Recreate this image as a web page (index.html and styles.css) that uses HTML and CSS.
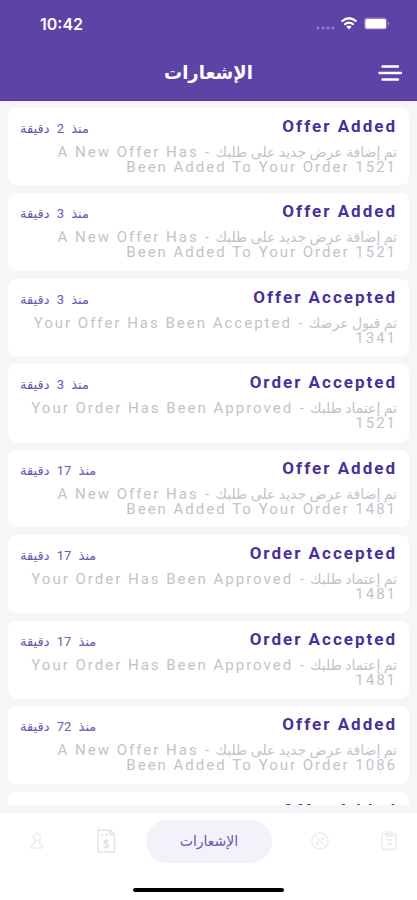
FILE: index.html
```html
<!DOCTYPE html>
<html lang="ar" dir="rtl">
<head>
<meta charset="utf-8">
<meta name="viewport" content="width=device-width, initial-scale=1">
<title>الإشعارات</title>
<link rel="stylesheet" href="styles.css">
</head>
<body>
<div class="app">
  <header class="header">
    <div class="status" dir="ltr">
      <span class="clock">10:42</span>
      <svg class="status-icons" width="76" height="16" viewBox="0 0 76 16" aria-hidden="true">
        <g fill="#9482c6"><circle cx="3" cy="12" r="1.5"/><circle cx="8" cy="12" r="1.5"/><circle cx="13" cy="12" r="1.5"/><circle cx="18" cy="12" r="1.5"/></g>
        <g fill="none" stroke="#fff" stroke-width="2.2"><path d="M26.5 5.5Q34 -1 41.500 5.500"/><path d="M29.300 8.700Q34 4.500 38.700 8.700"/></g>
        <path d="M31.300 10.600Q34 8.600 36.700 10.600L34 13.600Z" fill="#fff"/>
        <rect x="49" y="1.500" width="23" height="12" rx="3" fill="#8d7ac2"/>
        <rect x="50.500" y="3" width="20.500" height="9.500" rx="1.500" fill="#fff"/>
        <path d="M73 5.500Q75.500 7.500 73 9.500Z" fill="#a797d0"/>
      </svg>
    </div>
    <div class="bar">
      <button class="menu" type="button" aria-label="القائمة">
        <svg width="24" height="18" viewBox="0 0 24 18" fill="none" stroke="#fff" stroke-width="2.400" stroke-linecap="round"><path d="M4.500 2.500H20M1.500 9H23M4.500 15.500H20"/></svg>
      </button>
      <h1 class="title">الإشعارات</h1>
    </div>
  </header>

  <main class="feed">
    <ul class="list">
      <li class="card">
        <div class="top"><h2 class="name" dir="ltr">Offer Added</h2><time class="time">منذ <span class="count">2</span> دقيقة</time></div>
        <p class="text">تم إضافة عرض جديد على طلبك <span class="dash">-</span> <span class="en">A New Offer Has</span><br><span class="en">Been Added To Your Order 1521</span></p>
      </li>
      <li class="card">
        <div class="top"><h2 class="name" dir="ltr">Offer Added</h2><time class="time">منذ <span class="count">3</span> دقيقة</time></div>
        <p class="text">تم إضافة عرض جديد على طلبك <span class="dash">-</span> <span class="en">A New Offer Has</span><br><span class="en">Been Added To Your Order 1521</span></p>
      </li>
      <li class="card">
        <div class="top"><h2 class="name" dir="ltr">Offer Accepted</h2><time class="time">منذ <span class="count">3</span> دقيقة</time></div>
        <p class="text">تم قبول عرضك <span class="dash">-</span> <span class="en">Your Offer Has Been Accepted</span><br><span class="en">1341</span></p>
      </li>
      <li class="card">
        <div class="top"><h2 class="name" dir="ltr">Order Accepted</h2><time class="time">منذ <span class="count">3</span> دقيقة</time></div>
        <p class="text">تم إعتماد طلبك <span class="dash">-</span> <span class="en">Your Order Has Been Approved</span><br><span class="en">1521</span></p>
      </li>
      <li class="card">
        <div class="top"><h2 class="name" dir="ltr">Offer Added</h2><time class="time">منذ <span class="count">17</span> دقيقة</time></div>
        <p class="text">تم إضافة عرض جديد على طلبك <span class="dash">-</span> <span class="en">A New Offer Has</span><br><span class="en">Been Added To Your Order 1481</span></p>
      </li>
      <li class="card">
        <div class="top"><h2 class="name" dir="ltr">Order Accepted</h2><time class="time">منذ <span class="count">17</span> دقيقة</time></div>
        <p class="text">تم إعتماد طلبك <span class="dash">-</span> <span class="en">Your Order Has Been Approved</span><br><span class="en">1481</span></p>
      </li>
      <li class="card">
        <div class="top"><h2 class="name" dir="ltr">Order Accepted</h2><time class="time">منذ <span class="count">17</span> دقيقة</time></div>
        <p class="text">تم إعتماد طلبك <span class="dash">-</span> <span class="en">Your Order Has Been Approved</span><br><span class="en">1481</span></p>
      </li>
      <li class="card">
        <div class="top"><h2 class="name" dir="ltr">Offer Added</h2><time class="time">منذ <span class="count">72</span> دقيقة</time></div>
        <p class="text">تم إضافة عرض جديد على طلبك <span class="dash">-</span> <span class="en">A New Offer Has</span><br><span class="en">Been Added To Your Order 1086</span></p>
      </li>
      <li class="card">
        <div class="top"><h2 class="name" dir="ltr">Offer Added</h2></div>
      </li>
    </ul>
  </main>

  <footer class="footer">
    <nav class="tabs">
      <a class="tab" href="#orders" aria-label="الطلبات">
        <svg width="18" height="20" viewBox="0 0 18 20" fill="none" stroke="#eceef2" stroke-width="1.800" stroke-linejoin="round"><rect x="2" y="3" width="14" height="15.500" rx="2"/><path d="M6 1.500H12V5H6ZM5.500 9H12M7 13H11L12.500 11.500"/></svg>
      </a>
      <a class="tab" href="#offers" aria-label="العروض">
        <svg width="20" height="20" viewBox="0 0 20 20" fill="none" stroke="#eceef2" stroke-width="1.600" stroke-linejoin="round"><path d="M10 1.500L12.500 2.500L15 3L16 5.500L18.200 7.500L17.800 10L18.200 12.500L16 14.500L15 17L12.500 17.500L10 18.500L7.500 17.500L5 17L4 14.500L1.800 12.500L2.200 10L1.800 7.500L4 5.500L5 3L7.500 2.500Z"/><path d="M6.500 6.500L13.500 13.500"/><circle cx="12.500" cy="7.500" r="1"/><circle cx="7.500" cy="12.500" r="1"/></svg>
      </a>
      <a class="tab current" href="#notifications" aria-current="page">الإشعارات</a>
      <a class="tab" href="#invoices" aria-label="الفواتير">
        <svg width="20" height="24" viewBox="0 0 20 24" fill="none" stroke="#e1e3e8" stroke-width="1.500" stroke-linejoin="round"><path d="M2 1H14L18.500 5.500V23H2ZM14 1V5.500H18.500M5 6H7M9 6H12"/><path d="M12.500 12.500C11.500 11 8 11.300 8 13.200C8 15.500 12.700 14.500 12.700 17C12.700 19 9 19.200 7.700 17.500M10.300 10.500V20"/></svg>
      </a>
      <a class="tab" href="#profile" aria-label="حسابي">
        <svg width="14" height="18" viewBox="0 0 14 18" fill="none" stroke="#eceef2" stroke-width="1.700" stroke-linejoin="round"><circle cx="7" cy="5" r="3.500"/><path d="M5 8.500V10L1.500 14V16H12.500V14L9 10V8.500"/></svg>
      </a>
    </nav>
    <div class="home"></div>
  </footer>
</div>
</body>
</html>
```
FILE: styles.css
```css
* {
  box-sizing: border-box;
}

body {
  margin: 0;
  font-family: Roboto, "DejaVu Sans", sans-serif;
  background: #fff;
}

h1, h2, p, ul {
  margin: 0;
  padding: 0;
}

.app {
  display: flex;
  flex-direction: column;
  height: 100vh;
}

.header {
  background: #5d43a5;
  color: #fff;
  padding-top: 12px;
  border-bottom: 1px solid #503795;
}

.status {
  display: flex;
  align-items: center;
  justify-content: space-between;
  height: 24px;
  padding: 0 26px 0 40px;
}

.clock {
  font: 600 16px/24px Inter, sans-serif;
}

.bar {
  display: grid;
  grid-template-columns: 24px 1fr 24px;
  align-items: center;
  height: 64px;
  padding: 10px 15px 0;
}

.menu {
  display: flex;
  padding: 0;
  border: 0;
  background: none;
}

.title {
  font-size: 18px;
  line-height: 32px;
  font-weight: 700;
  text-align: center;
}

.feed {
  flex: 1;
  min-height: 0;
  overflow: hidden;
  background: #f6f6f9;
}

.list {
  display: grid;
  grid-template-rows: repeat(9, 1fr);
  gap: 8px;
  height: 110%;
  padding: 7px 8px 6px;
  list-style: none;
}

.card {
  min-height: 0;
  padding: 4px 12px 0;
  border-radius: 8px;
  background: #fff;
}

.top {
  display: flex;
  align-items: center;
  justify-content: space-between;
  height: 28px;
}

.name {
  font-size: 17px;
  line-height: 28px;
  font-weight: 700;
  letter-spacing: 2px;
  color: #48309b;
}

.time {
  padding-top: 6px;
  font-size: 13px;
  line-height: 20px;
  color: #6e58b1;
}

.count {
  padding: 0 4px;
}

.text {
  padding-top: 5px;
  font-size: 14px;
  line-height: 15px;
  white-space: nowrap;
  color: #bfc4ca;
}

.en {
  font-size: 15px;
  letter-spacing: 2px;
}

.dash {
  padding: 0 3px;
}

.footer {
  border-top: 8px solid #f5f5f8;
  background: #fff;
}

.tabs {
  display: grid;
  grid-template-columns: 56fr 82fr 140fr 66fr 73fr;
  align-items: center;
  justify-items: center;
  height: 56px;
}

.tab {
  display: flex;
  color: #6e56b0;
  text-decoration: none;
}

.current {
  align-items: center;
  justify-content: center;
  width: 90%;
  height: 43px;
  border-radius: 22px;
  background: #f3f1f9;
  font-size: 14px;
}

.home {
  width: 36%;
  height: 4px;
  margin: 19px auto 8px;
  border-radius: 2px;
  background: #000;
}
```
